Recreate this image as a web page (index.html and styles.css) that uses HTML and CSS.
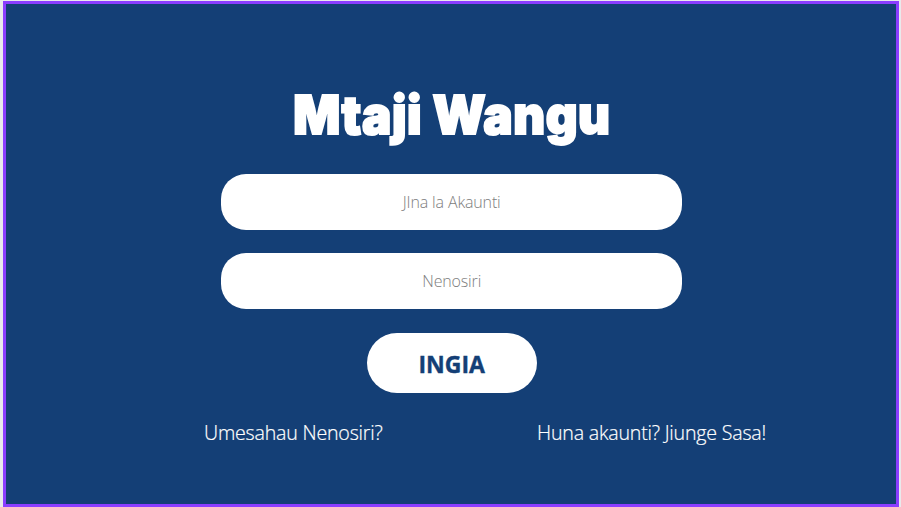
FILE: index.html
```html
<!DOCTYPE html>
<html lang="sw">
<head>
<meta charset="utf-8">
<title>Mtaji Wangu</title>
<link rel="stylesheet" href="styles.css">
</head>
<body>
<main class="screen">
  <h1 class="brand"><span class="brand-text">Mtaji Wangu</span></h1>
  <form class="login">
    <input class="field" type="text" placeholder="JIna la Akaunti">
    <input class="field" type="password" placeholder="Nenosiri">
    <button class="submit" type="button"><span class="submit-text">INGIA</span></button>
  </form>
  <nav class="links">
    <a class="link">Umesahau Nenosiri?</a>
    <a class="link">Huna akaunti? Jiunge Sasa!</a>
  </nav>
</main>
</body>
</html>
```
FILE: styles.css
```css
* { box-sizing: border-box; }
body { margin: 0; overflow: hidden; background: #e9e9ec; font-family: "Open Sans", sans-serif; }
.screen {
  width: 896px;
  height: 506px;
  margin: 1px 0 0 3px;
  padding-top: 76.5px;
  border: 3px solid #8b3dff;
  background: #143f76;
  display: flex;
  flex-direction: column;
  align-items: center;
}
.brand { margin: 0; height: 93.5px; line-height: 66px; font-size: 53px; font-weight: 900; color: #fff; white-space: nowrap; }
.brand-text {
  display: inline-block;
  font-family: Inter, sans-serif;
  letter-spacing: .6px;
  -webkit-text-stroke: 2px #fff;
  transform: translateX(1px) scaleX(.929);
}
.login { display: flex; flex-direction: column; align-items: center; gap: 23.4px; width: 461px; margin-left: 1.4px; }
.field {
  width: 100%; height: 56px; padding: 0; border: 0; border-radius: 25px;
  background: #fff; text-align: center;
  font: 300 16px "Open Sans", sans-serif; letter-spacing: -.15px;
}
.field::placeholder { color: #7d7d7d; opacity: 1; }
.submit {
  width: 170px; height: 60px; padding: 0; border: 0; border-radius: 30px;
  background: #fff; color: #143f76;
  font: 700 24px "Open Sans", sans-serif;
}
.submit-text { display: inline-block; -webkit-text-stroke: .4px #143f76; transform: translateY(1px) scaleX(.96); }
.links { display: flex; justify-content: space-between; width: 562px; margin: 26px 0 0 68px; }
.link { color: #fff; font-size: 19.6px; font-weight: 300; line-height: 28px; letter-spacing: -.2px; white-space: nowrap; -webkit-text-stroke: .2px #fff; }
```
